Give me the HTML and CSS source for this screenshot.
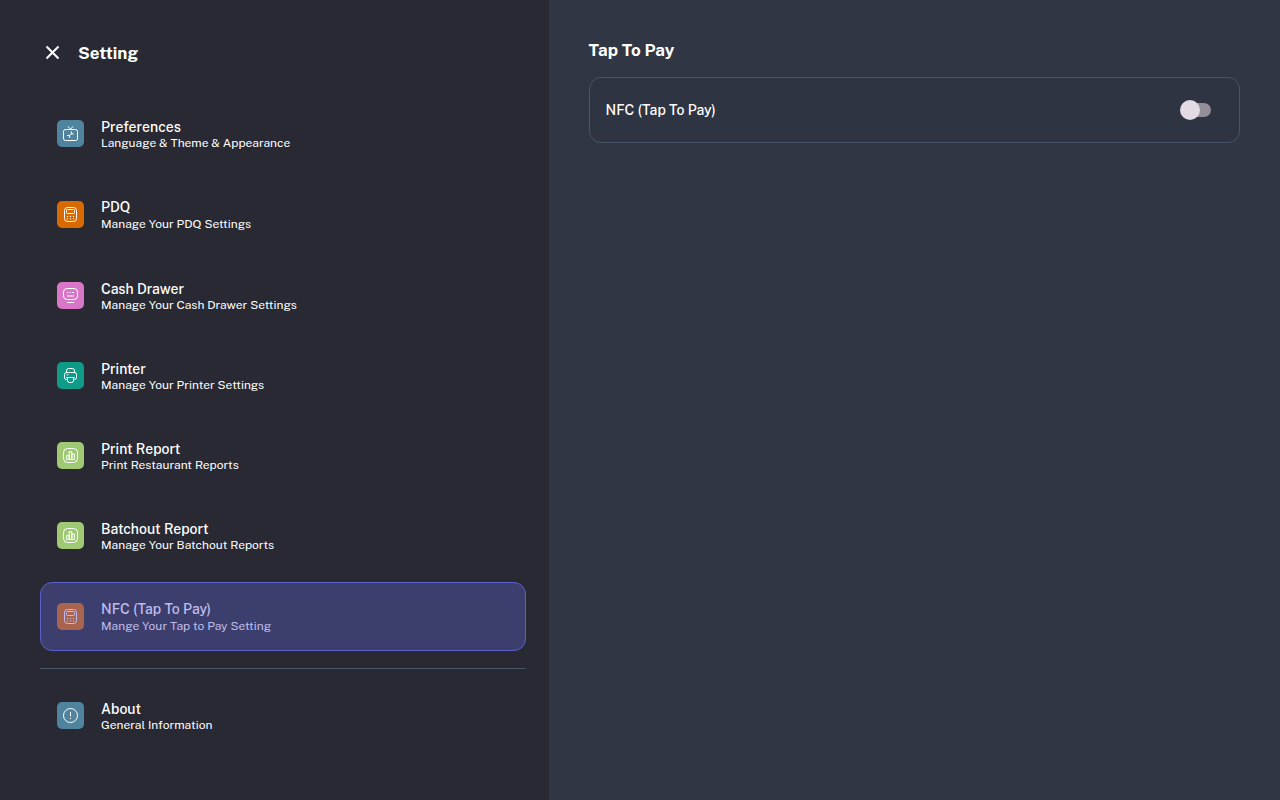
FILE: index.html
```html
<!DOCTYPE html>
<html lang="en">
    <head>
        <meta charset="UTF-8" />
        <meta name="viewport" content="width=device-width, initial-scale=1.0" />
        <title>Setting</title>
        <link rel="stylesheet" href="styles.css">
    </head>
    <body>
        <svg class="symbols" aria-hidden="true">
            <symbol id="calculator" viewBox="0.5 0.5 17 17">
                <rect x="3" y="2" width="12" height="14" rx="3" />
                <rect x="5" y="4" width="8" height="4" rx="1" />
                <path d="M5.4 11h1.2M8.4 11h1.2M11.4 11h1.2M5.4 13.4h1.2M8.4 13.4h1.2M11.4 13.4h1.2" />
            </symbol>
            <symbol id="chart" viewBox="0.5 0.5 17 17">
                <rect x="2" y="2" width="14" height="14" rx="4" />
                <path d="M5.2 13V9.2h2.5V13zM7.7 13V5.2h2.6V13zM10.3 13V7.5h2.5V13z" />
            </symbol>
        </svg>
        <div class="container">
            <nav class="sidebar">
                <div class="header">
                    <button class="close" aria-label="Close">
                        <svg width="15" height="15" viewBox="0 0 15 15">
                            <path d="M1.5 1.5l12 12M13.5 1.5l-12 12" />
                        </svg>
                    </button>
                    <h1>Setting</h1>
                </div>
                <div class="menu">
                    <a class="item" href="#">
                        <span class="icon blue">
                            <svg viewBox="0.5 0.5 17 17">
                                <rect x="2" y="5" width="14" height="11" rx="2" />
                                <path d="M6.3 1.8L9 4.6l2.7-2.8M5.8 11h2.4v2.4M12.2 9.4H9.8V7M8.2 11l1.6-1.6" />
                            </svg>
                        </span>
                        <span class="text">
                            <span class="title">Preferences</span>
                            <span class="desc">Language &amp; Theme &amp; Appearance</span>
                        </span>
                    </a>
                    <a class="item tall" href="#">
                        <span class="icon orange"><svg><use href="#calculator" /></svg></span>
                        <span class="text">
                            <span class="title">PDQ</span>
                            <span class="desc">Manage Your PDQ Settings</span>
                        </span>
                    </a>
                    <a class="item" href="#">
                        <span class="icon pink">
                            <svg viewBox="0.5 0.5 17 17">
                                <rect x="2" y="2" width="14" height="11" rx="3.5" />
                                <path d="M5.5 6h1.2M8 6h1.2M10.5 6h2M5.5 9.5h7M5.5 16h7" />
                            </svg>
                        </span>
                        <span class="text">
                            <span class="title">Cash Drawer</span>
                            <span class="desc">Manage Your Cash Drawer Settings</span>
                        </span>
                    </a>
                    <a class="item" href="#">
                        <span class="icon green">
                            <svg viewBox="0.5 0.5 17 17">
                                <path d="M5 6V4.2A2.2 2.2 0 0 1 7.2 2h3.6A2.2 2.2 0 0 1 13 4.2V6M5.8 13H4.9A1.9 1.9 0 0 1 3 11.1V8a2 2 0 0 1 2-2h8a2 2 0 0 1 2 2v3.1a1.9 1.9 0 0 1-1.9 1.9h-.9M4.8 11h8.4M6 11v3a2 2 0 0 0 2 2h2a2 2 0 0 0 2-2v-3M5 8.3h1.8" />
                            </svg>
                        </span>
                        <span class="text">
                            <span class="title">Printer</span>
                            <span class="desc">Manage Your Printer Settings</span>
                        </span>
                    </a>
                    <a class="item" href="#">
                        <span class="icon lime"><svg><use href="#chart" /></svg></span>
                        <span class="text">
                            <span class="title">Print Report</span>
                            <span class="desc">Print Restaurant Reports</span>
                        </span>
                    </a>
                    <a class="item" href="#">
                        <span class="icon lime"><svg><use href="#chart" /></svg></span>
                        <span class="text">
                            <span class="title">Batchout Report</span>
                            <span class="desc">Manage Your Batchout Reports</span>
                        </span>
                    </a>
                    <a class="item tall active" href="#" aria-current="page">
                        <span class="icon rust"><svg><use href="#calculator" /></svg></span>
                        <span class="text">
                            <span class="title">NFC (Tap To Pay)</span>
                            <span class="desc">Mange Your Tap to Pay Setting</span>
                        </span>
                    </a>
                    <hr class="divider" />
                    <a class="item" href="#">
                        <span class="icon blue">
                            <svg viewBox="0.5 0.5 17 17">
                                <circle cx="9" cy="9" r="7" />
                                <path d="M9 5.4v4.4M9 11.4v1.2" />
                            </svg>
                        </span>
                        <span class="text">
                            <span class="title">About</span>
                            <span class="desc">General Information</span>
                        </span>
                    </a>
                </div>
            </nav>
            <main class="content">
                <h2>Tap To Pay</h2>
                <div class="card">
                    <label for="nfc">NFC (Tap To Pay)</label>
                    <input class="switch" type="checkbox" role="switch" id="nfc" />
                </div>
            </main>
        </div>
    </body>
</html>
```

FILE: styles.css
```css
* {
    box-sizing: border-box;
}
body {
    font-family: "Public Sans", Inter, "Liberation Sans", sans-serif;
    margin: 0;
    color: #fff;
    background-color: #303643;
}
.symbols {
    display: none;
}
.container {
    display: grid;
    grid-template-columns: 3fr 4fr;
    min-height: 100vh;
}
.sidebar {
    padding: 40px 23px 40px 40px;
    background-color: #282933;
}
.header {
    display: flex;
    align-items: center;
    gap: 13px;
    height: 25px;
    margin-bottom: 35px;
}
h1,
h2 {
    margin: 0;
    font-size: 17px;
    line-height: 20px;
    font-weight: 700;
}
.close {
    display: flex;
    padding: 5px;
    border: none;
    background: none;
    cursor: pointer;
}
.close svg {
    fill: none;
    stroke: #fff;
    stroke-width: 2;
}
.menu {
    display: flex;
    flex-direction: column;
    gap: 13px;
}
.item {
    display: flex;
    align-items: center;
    gap: 17px;
    padding: 16px;
    border: 1px solid transparent;
    border-radius: 12px;
    color: #fff;
    text-decoration: none;
}
.item.active {
    color: #c0bdec;
    background-color: #3c3f6e;
    border-color: #5b5fc7;
}
.icon {
    display: flex;
    align-items: center;
    justify-content: center;
    width: 27px;
    height: 27px;
    border-radius: 5px;
}
.icon svg {
    width: 17px;
    height: 17px;
    fill: none;
    stroke: currentColor;
    stroke-width: 1;
}
.blue {
    background-color: #50839d;
}
.orange {
    background-color: #d96a02;
}
.pink {
    background-color: #d876c8;
}
.green {
    background-color: #109b89;
}
.lime {
    background-color: #9fc973;
}
.rust {
    background-color: #a96450;
}
.text {
    display: flex;
    flex-direction: column;
}
.title {
    font-size: 14px;
    line-height: 20px;
    font-weight: 500;
}
.desc {
    font-size: 12px;
    line-height: 13px;
}
.tall .desc {
    line-height: 15px;
}
.divider {
    width: 100%;
    margin: 4px 0 0;
    border: none;
    border-top: 1px solid #475569;
}
.content {
    padding: 40px;
}
.card {
    display: flex;
    align-items: center;
    justify-content: space-between;
    margin-top: 17px;
    padding: 22px 28px 22px 16px;
    border: 1px solid #475569;
    border-radius: 12px;
    background-color: #2e3442;
    font-size: 14px;
    line-height: 20px;
    font-weight: 500;
}
.switch {
    display: flex;
    align-items: center;
    appearance: none;
    width: 31px;
    height: 20px;
    margin: 0;
    cursor: pointer;
}
.switch::before {
    content: "";
    width: 20px;
    height: 20px;
    border-radius: 50%;
    background-color: #e2dbe3;
    z-index: 1;
}
.switch::after {
    content: "";
    flex: 1;
    height: 14px;
    margin-left: -14px;
    border-radius: 7px;
    background-color: #938e98;
}
.switch:checked {
    flex-direction: row-reverse;
}
.switch:checked::after {
    margin: 0 -14px 0 0;
    background-color: #5b5fc7;
}
```
